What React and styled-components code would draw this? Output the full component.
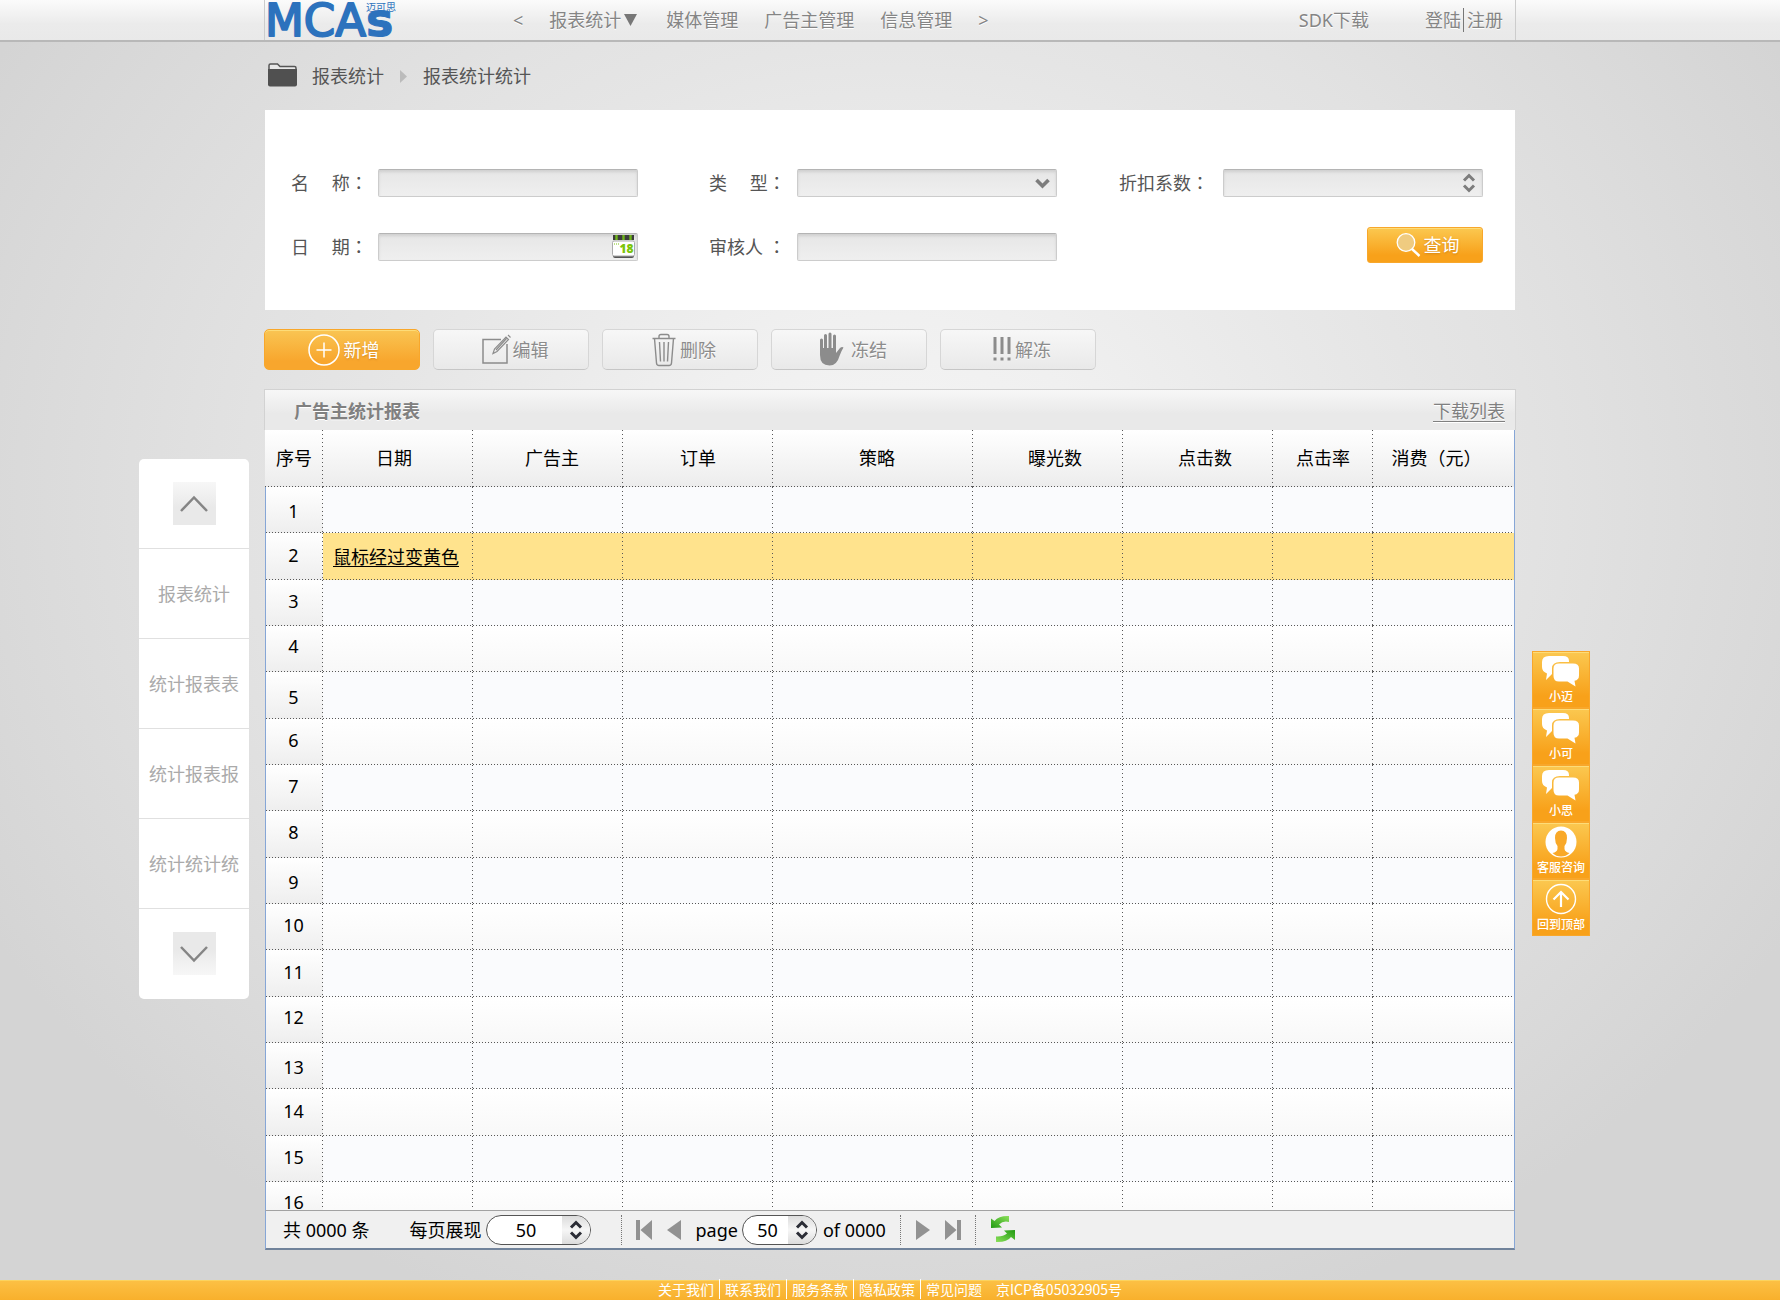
import React from "react";
import styled, { createGlobalStyle, css } from "styled-components";

const GlobalStyle = createGlobalStyle`
  *, *::before, *::after { box-sizing: border-box; }
  body {
    margin: 0;
    color: #555;
    font: 400 18px/24px "Noto Sans", "Noto Sans CJK SC", sans-serif;
    background: #d4d4d4;
  }
  button, input, select { font: inherit; color: inherit; }
  a { color: inherit; text-decoration: none; }
`;

const Page = styled.div`
  min-height: 100vh;
  display: flex;
  flex-direction: column;
  background: radial-gradient(ellipse 900px 760px at 50% 500px,
    #f5f5f5 0%, #f0f0f0 24%, #e5e5e5 60%, #e2e2e2 72%, #d9d9d9 100%, #d4d4d4 115%);
`;

/* ---------- header ---------- */
const Header = styled.header`
  height: 42px;
  border-bottom: 2px solid #b8b8b8;
  background: linear-gradient(#fbfbfb, #ebebeb 60%, #e9e9e9);
  display: flex;
  justify-content: center;
`;
const HeaderInner = styled.div`
  width: 100%;
  max-width: 1252px;
  padding-right: 12px;
  border: solid #ccc;
  border-width: 0 1px;
  display: flex;
  align-items: center;
  color: #858585;
  text-shadow: 0 1px 0 #fff;
`;
const Logo = styled.a`
  width: 132px;
  height: 40px;
  margin-right: 116px;
  flex: none;
  text-shadow: none;
  svg { display: block; overflow: visible; }
`;
const Nav = styled.nav`
  display: flex;
  align-items: center;
  gap: 26px;
  flex: 1;
  white-space: nowrap;
`;
const PlainButton = styled.button`
  border: 0;
  padding: 0;
  background: none;
  display: flex;
  align-items: center;
  gap: 3px;
  cursor: pointer;
  text-shadow: inherit;
`;
const Account = styled.div`
  display: flex;
  gap: 56px;
  white-space: nowrap;
`;
const Sign = styled.span`
  display: flex;
  a + a {
    border-left: 1px solid #777;
    margin-left: 2px;
    padding-left: 3px;
  }
`;

/* ---------- page frame ---------- */
const Frame = styled.div`
  flex: 1;
  display: grid;
  grid-template-columns: minmax(126px, 1fr) minmax(0, 1250px) minmax(75px, 1fr);
  align-items: start;
`;
const Main = styled.main`
  min-width: 0;
  padding-bottom: 30px;
`;
const Breadcrumb = styled.nav`
  height: 68px;
  padding: 0 3px;
  display: flex;
  align-items: center;
  gap: 15px;
`;

/* ---------- search ---------- */
const SearchPanel = styled.form`
  height: 200px;
  padding: 59px 32px 0 26px;
  background: #fff;
  display: grid;
  grid-template-columns: 418fr 410fr 364fr;
  grid-auto-rows: 28px;
  row-gap: 36px;
  align-items: center;
`;
const Field = styled.div`
  display: flex;
  align-items: center;
`;
const FieldLabel = styled.label`
  width: ${(p) => p.$width}px;
  flex: none;
  padding-bottom: 2px;
  white-space: pre;
`;
const Colon = styled.span`
  font-family: "Noto Sans CJK TC", sans-serif;
`;
const Control = styled.div`
  position: relative;
  width: 260px;
  min-width: 0;
  height: 28px;
  svg {
    position: absolute;
    right: 3px;
    top: 1px;
    pointer-events: none;
  }
`;
const controlStyle = css`
  display: block;
  width: 100%;
  height: 100%;
  padding: 0 32px 0 8px;
  border: 1px solid #ccc;
  border-top-color: #b4b4b4;
  border-radius: 2px;
  background: linear-gradient(#e6e6e6, #efefef);
  box-shadow: inset 0 2px 3px rgba(0, 0, 0, 0.1);
  appearance: none;
  outline-color: #f8a51b;
`;
const TextInput = styled.input`${controlStyle}
  &::-webkit-inner-spin-button { display: none; }
`;
const SelectInput = styled.select`${controlStyle}`;
const SearchAction = styled.div`
  display: flex;
  justify-content: flex-end;
  padding-bottom: 4px;
`;

/* ---------- buttons ---------- */
const orange = css`
  color: #fff;
  border-color: #f8a72b;
  background: linear-gradient(#fbc850, #f8a11a 80%);
  text-shadow: 0 1px 2px rgba(160, 90, 0, 0.4);
  box-shadow: inset 0 1px 0 #fddc78;
`;
const SearchButton = styled.button`
  width: 116px;
  height: 36px;
  border: 1px solid;
  border-radius: 3px;
  padding: 0 0 0 4px;
  display: flex;
  align-items: center;
  justify-content: center;
  gap: 3px;
  cursor: pointer;
  ${orange}
`;
const Toolbar = styled.div`
  display: flex;
  gap: 13px;
  margin: 19px -1px;
`;
const ToolButton = styled.button`
  width: 156px;
  height: 41px;
  padding: 0 0 0 8px;
  border: 1px solid #d6d6d6;
  border-bottom-color: #c6c6c6;
  border-radius: 5px;
  color: #8c8c8c;
  background: linear-gradient(#f7f7f7, #e9e9e9);
  text-shadow: 0 1px 0 #fff;
  display: flex;
  align-items: center;
  justify-content: center;
  gap: 4px;
  cursor: pointer;
  ${(p) => p.$primary && css`
    ${orange}
    background: linear-gradient(#f9c553, #f8a62d 80%);
    padding-left: 3px;
  `}
`;

/* ---------- report ---------- */
const ReportHead = styled.div`
  height: 41px;
  margin: 0 -1px;
  padding: 2px 10px 0 29px;
  border: 1px solid #d2d2d2;
  border-bottom: 0;
  background: linear-gradient(#f7f7f7, #e9e9e9 60%);
  color: #808080;
  text-shadow: 0 1px 0 #fff;
  display: flex;
  align-items: center;
  justify-content: space-between;
`;
const ReportTitle = styled.h2`
  margin: 0;
  font-size: 18px;
  font-weight: 700;
`;
const DownloadLink = styled.a`
  text-decoration: underline;
  text-underline-offset: 3px;
`;
const TableView = styled.div`
  height: 780px;
  overflow: hidden;
  background: #fafbfd;
`;
const dotsX = "repeating-linear-gradient(90deg, #585858 0 1px, transparent 1px 3px) bottom left / 100% 1px no-repeat";
const dotsY = "repeating-linear-gradient(#585858 0 1px, transparent 1px 4px) top right / 1px 100% no-repeat";
const Table = styled.table`
  width: 100%;
  table-layout: fixed;
  border-collapse: separate;
  border-spacing: 0;
  color: #000;
  th, td { padding: 0 0 2px; background: ${dotsX}, ${dotsY}; }
  th:last-child, td:last-child {
    background: ${dotsX};
    border-right: 1px solid #86a6d6;
  }
`;
const Col = styled.col`
  width: ${(p) => (p.$width ? `${p.$width}px` : "auto")};
`;
const HeadRow = styled.tr`
  height: 57px;
  background: linear-gradient(#fff, #ececec);
`;
const HeadCell = styled.th`
  font-weight: 400;
  && {
    padding-left: ${(p) => Math.max(p.$shift, 0)}px;
    padding-right: ${(p) => Math.max(-p.$shift, 0)}px;
  }
`;
const Row = styled.tr`
  height: 46px;
  background: #fafbfd;
  &:nth-child(3n + 2) { height: 47px; }
  &:nth-child(even) { background: linear-gradient(#fff, #f8f8f8); }
  && td:first-child {
    padding: 0 2px 4px 0;
    line-height: 16px;
    text-align: center;
    border-left: 1px solid #86a6d6;
    background: ${dotsX}, ${dotsY}, linear-gradient(#fff, #eee);
  }
  &&:nth-child(4n + 1) td:first-child { padding: 2px 2px 0 0; }
  &&:nth-child(4n) td:first-child { padding-bottom: 6px; }
  ${(p) => p.$active && css`&& { background: #ffe38d; }`}
  &&:hover { background: #ffe38d; }
`;
const CellLink = styled.a`
  display: block;
  padding: 2px 0 0 10px;
  white-space: nowrap;
  text-decoration: underline;
  text-underline-offset: 2px;
`;

/* ---------- pager ---------- */
const Pager = styled.div`
  height: 40px;
  padding: 0 17px;
  border: 1px solid #86a6d6;
  border-top-color: #a2a2a2;
  border-bottom: 2px solid #71839b;
  background: #f0f0f0;
  color: #000;
  display: flex;
  align-items: center;
  gap: 14px;
  white-space: nowrap;
`;
const PagerGroup = styled.div`
  display: flex;
  align-items: center;
  gap: 4px;
  margin-left: ${(p) => p.$indent || 0}px;
`;
const StepBox = styled.span`
  display: flex;
  width: ${(p) => p.$width}px;
  height: 30px;
  border: 1px solid #555;
  border-radius: 15px;
  background: #fff;
  overflow: hidden;
  input, select {
    flex: 1;
    min-width: 0;
    border: 0;
    padding: 0 0 0 4px;
    background: none;
    text-align: center;
    text-align-last: center;
    appearance: none;
    outline: 0;
  }
  input::-webkit-inner-spin-button { display: none; }
`;
const StepIcon = styled.span`
  width: 28px;
  flex: none;
  display: flex;
  align-items: center;
  justify-content: center;
  background: linear-gradient(#dcdcdc, #f6f6f6 50%, #dcdcdc);
`;
const Divider = styled.span`
  width: 1px;
  height: 30px;
  border-left: 1px dotted #777;
`;

/* ---------- side rails ---------- */
const SideMenu = styled.nav`
  justify-self: end;
  width: 110px;
  margin: 417px 16px 0 0;
  background: #fff;
  border-radius: 5px;
`;
const SideItem = styled.div`
  height: 90px;
  display: flex;
  align-items: center;
  justify-content: center;
  color: #aaa;
  border-bottom: 1px solid #e0e0e0;
  &:last-child { border-bottom-color: transparent; }
`;
const SideArrow = styled.button`
  width: 43px;
  height: 43px;
  border: 0;
  padding: 0;
  display: flex;
  align-items: center;
  justify-content: center;
  background: linear-gradient(#f7f7f7, #e9e9e9 60%);
  cursor: pointer;
  ${(p) => p.$down && css`background: linear-gradient(#e9e9e9 40%, #f7f7f7);`}
`;
const HelpRail = styled.aside`
  width: 58px;
  margin: 609px 0 0 17px;
`;
const HelpButton = styled.button`
  width: 58px;
  height: 57px;
  padding: 1px 0 0;
  border: 1px solid;
  font-size: 12px;
  line-height: 16px;
  font-weight: 500;
  white-space: nowrap;
  display: flex;
  flex-direction: column;
  align-items: center;
  justify-content: center;
  gap: 2px;
  cursor: pointer;
  ${orange}
  text-shadow: none;
`;

/* ---------- footer ---------- */
const Footer = styled.footer`
  height: 20px;
  border-top: 1px solid #fbd35f;
  background: linear-gradient(#fcc044, #f8b02c);
  color: #fff;
  font-family: "Noto Sans CJK SC", sans-serif;
  font-size: 14px;
  line-height: 16px;
  display: flex;
  justify-content: center;
  gap: 14px;
  white-space: nowrap;
`;
const FooterLinks = styled.span`
  display: flex;
  a + a::before {
    content: "";
    border-left: 1px solid #fff;
    margin: 0 5px;
  }
`;

/* ---------- drawings ---------- */
const LogoArt = () => (
  <svg width="132" height="40" viewBox="0 0 132 40" aria-hidden="true">
    <g fill="#2c72bd" stroke="#2c72bd" strokeLinejoin="round">
      <text x="0" y="36" fontFamily="'DejaVu Sans', sans-serif" fontSize="45" fontWeight="400" strokeWidth="2">MCA</text>
      <text x="101" y="36" fontFamily="'DejaVu Sans', sans-serif" fontSize="46" fontWeight="700" strokeWidth="1">s</text>
      <text x="101" y="11" fontFamily="'Noto Sans CJK SC', sans-serif" fontSize="10" stroke="none">迈可思</text>
    </g>
  </svg>
);
const CaretDown = () => (
  <svg width="16" height="12" viewBox="0 0 16 12" aria-hidden="true"><path d="M0 0h13L6.500 12z" fill="#777" /></svg>
);
const FolderIcon = () => (
  <svg width="29" height="26" viewBox="0 0 29 26" aria-hidden="true">
    <path d="M1 6V2.500Q1 1 2.500 1H9.500L12 3.500H26.500Q28 3.500 28 5V7" fill="#e8e8e8" stroke="#555" strokeWidth="1.500" />
    <path d="M0 6H29V21.500Q29 23.500 27 23.500H2Q0 23.500 0 21.500Z" fill="#505050" />
  </svg>
);
const CrumbArrow = () => (
  <svg width="9" height="13" viewBox="0 0 9 13" aria-hidden="true"><path d="M1 0L8 6.500L1 13z" fill="#bbb" /></svg>
);
const SelectChevron = () => (
  <svg width="22" height="26" viewBox="0 0 22 26" aria-hidden="true"><path d="M4.500 10L10.500 16L16.500 10" fill="none" stroke="#7d7d7d" strokeWidth="3.600" /></svg>
);
const UpDown = ({ color }) => (
  <svg width="22" height="26" viewBox="0 0 22 26" aria-hidden="true">
    <path d="M6 10.500L11 5.500L16 10.500M6 15.500L11 20.500L16 15.500" fill="none" stroke={color} strokeWidth="3" />
  </svg>
);
const CalendarIcon = () => (
  <svg width="23" height="26" viewBox="0 0 23 26" aria-hidden="true">
    <rect x="1" y="14" width="21" height="10" rx="2" fill="#555" />
    <rect x="0.500" y="7" width="22" height="15" rx="1.500" fill="#fff" stroke="#aaa" />
    <rect x="1" y="1" width="21" height="5" fill="#3d3d3d" />
    <path d="M4.500 1v5M11.500 1v5M18.500 1v5" stroke="#6fb51c" strokeWidth="2.400" />
    <path d="M2 10h5" stroke="#7cc50c" strokeDasharray="1 1" />
    <text x="7.500" y="19" fontFamily="'Open Sans', sans-serif" fontSize="12" fontWeight="800" fill="#7cc50c">18</text>
  </svg>
);
const SearchIcon = () => (
  <svg width="26" height="26" viewBox="0 0 26 26" fill="none" stroke="#fff" aria-hidden="true">
    <circle cx="11" cy="10.500" r="8.800" fill="#efcb80" strokeWidth="1.300" />
    <path d="M17 17L24.500 24" strokeWidth="2.400" />
  </svg>
);
const PlusIcon = () => (
  <svg width="32" height="32" viewBox="0 0 32 32" fill="none" stroke="#fff" aria-hidden="true">
    <circle cx="16" cy="16" r="15" strokeWidth="1.500" /><path d="M16 8.500v15M8.500 16h15" strokeWidth="1.500" />
  </svg>
);
const EditIcon = () => (
  <svg width="27" height="34" viewBox="0 0 27 34" fill="none" stroke="#8c8c8c" overflow="visible" aria-hidden="true">
    <path d="M19 6.500H1V30H25V11" strokeWidth="1.500" />
    <path d="M11 20.500L12.500 16L24 4L26.500 6.500L15 18.500ZM14 17L24.500 5.500M26 2L28.500 4.500" strokeWidth="1.200" />
  </svg>
);
const TrashIcon = () => (
  <svg width="24" height="34" viewBox="0 0 24 34" fill="none" stroke="#8c8c8c" strokeWidth="1.400" aria-hidden="true">
    <path d="M0.500 5.500H23.500M7 5V3.500Q7 1.500 9 1.500H15Q17 1.500 17 3.500V5M2.500 5.500L4.500 30Q4.700 32.500 7 32.500H17Q19.300 32.500 19.500 30L21.500 5.500M7.500 9L8.500 28.500M12 9V28.500M16.500 9L15.500 28.500" />
  </svg>
);
const HandIcon = () => (
  <svg width="28" height="36" viewBox="-1 0 28 36" overflow="visible" aria-hidden="true">
    <path d="M1.500 8V21M5.500 3.500V19M10 2V19M14.500 4V19" stroke="#8c8c8c" strokeWidth="3" strokeLinecap="round" />
    <path d="M0 16H16V21L20 16Q22 14.500 23.500 15.500Q21.500 18.500 19.500 24Q17 33.500 9.500 33.500Q0 33.500 0 23Z" fill="#8c8c8c" />
  </svg>
);
const BangIcon = () => (
  <svg width="18" height="26" viewBox="0 0 18 26" fill="none" stroke="#8c8c8c" strokeWidth="3" aria-hidden="true">
    <path d="M2 0V17M9 0V17M16 0V17M2 20.500V23.500M9 20.500V23.500M16 20.500V23.500" />
  </svg>
);
const SideChevron = ({ down }) => (
  <svg width="28" height="18" viewBox="0 0 28 18" fill="none" stroke="#858585" strokeWidth="2.500" aria-hidden="true">
    <path d={down ? "M1 2L14 15.500L27 2" : "M1 16L14 2.500L27 16"} />
  </svg>
);
const ChatIcon = () => (
  <svg width="38" height="32" viewBox="0 0 38 32" aria-hidden="true">
    <path d="M7 1H21Q27 1 27 6V7H18Q10 7 10 13.500V19L4 25L5 18.500Q0 16.500 0 12V7Q0 1 7 1Z" fill="#fff" />
    <path d="M17 8.500H31Q37 8.500 37 13.500V20.500Q37 25 32.500 25.800L33.500 31.500L25.500 26.500H17Q11.500 26.500 11.500 21V13.500Q11.500 8.500 17 8.500Z" fill="#fff" />
  </svg>
);
const PersonIcon = () => (
  <svg width="32" height="32" viewBox="0 0 32 32" aria-hidden="true">
    <circle cx="16" cy="16" r="15.500" fill="#fff" />
    <path d="M16 4.500Q22 4.500 22 12Q22 17 19.500 20V23Q20 26 24.500 27Q21 30.500 16 30.500Q11 30.500 7.500 27Q12 26 12.500 23V20Q10 17 10 12Q10 4.500 16 4.500Z" fill="#f9a928" />
  </svg>
);
const TopIcon = () => (
  <svg width="32" height="32" viewBox="0 0 32 32" fill="none" stroke="#fff" aria-hidden="true">
    <circle cx="16" cy="16" r="14.500" strokeWidth="1.400" />
    <path d="M16 24V9.500M8.500 16.500L16 9L23.500 16.500" strokeWidth="2.200" />
  </svg>
);
const pageIcons = {
  first: "M0 0H4V26H0ZM16 0V26L4.500 13Z",
  prev: "M15 0V26L1 13Z",
  next: "M1 0V26L15 13Z",
  last: "M0 0V26L11.500 13ZM12 0H16V26H12Z",
};
const PageIcon = ({ name }) => (
  <svg width="16" height="20" viewBox="0 0 16 26" preserveAspectRatio="none" aria-hidden="true"><path d={pageIcons[name]} fill="#929292" /></svg>
);
const RefreshIcon = () => (
  <svg width="26" height="30" viewBox="0 0 26 30" aria-hidden="true">
    <defs>
      <linearGradient id="leaf" x1="0" y1="1" x2="1" y2="0"><stop offset="0" stopColor="#219a12" /><stop offset="1" stopColor="#8be05a" /></linearGradient>
      <linearGradient id="leafBack" x1="1" y1="0" x2="0" y2="1"><stop offset="0" stopColor="#219a12" /><stop offset="1" stopColor="#8be05a" /></linearGradient>
    </defs>
    <path d="M1 3.500L4.500 6Q9 0.500 19 1V7Q13 5.500 9 9.500L12 12.500L1 13Z" fill="url(#leaf)" />
    <path d="M25 15L14 15.500L17 18.500Q13 22 6 21.500V27Q17 27.500 21 22L25 25Z" fill="url(#leafBack)" />
  </svg>
);

/* ---------- data ---------- */
const columns = [
  { name: "序号", width: 58, shift: 0 },
  { name: "日期", width: 150, shift: -8 },
  { name: "广告主", width: 150, shift: 8 },
  { name: "订单", width: 150, shift: 0 },
  { name: "策略", width: 200, shift: 8 },
  { name: "曝光数", width: 150, shift: 14 },
  { name: "点击数", width: 150, shift: 14 },
  { name: "点击率", width: 100, shift: 0 },
  { name: "消费（元）", shift: -14 },
];
const rows = Array.from({ length: 16 }, (_, i) => i + 1);
const tools = [
  { label: "新增", icon: <PlusIcon />, primary: true },
  { label: "编辑", icon: <EditIcon /> },
  { label: "删除", icon: <TrashIcon /> },
  { label: "冻结", icon: <HandIcon /> },
  { label: "解冻", icon: <BangIcon /> },
];
const sideLinks = ["报表统计", "统计报表表", "统计报表报", "统计统计统"];
const helpers = [
  { label: "小迈", icon: <ChatIcon /> },
  { label: "小可", icon: <ChatIcon /> },
  { label: "小思", icon: <ChatIcon /> },
  { label: "客服咨询", icon: <PersonIcon /> },
  { label: "回到顶部", icon: <TopIcon /> },
];
const footerLinks = ["关于我们", "联系我们", "服务条款", "隐私政策", "常见问题"];

export default function App() {
  return (
    <Page>
      <GlobalStyle />
      <Header>
        <HeaderInner>
          <Logo href="#" aria-label="MCAs"><LogoArt /></Logo>
          <Nav>
            <PlainButton type="button">&lt;</PlainButton>
            <PlainButton type="button">报表统计<CaretDown /></PlainButton>
            <a href="#media">媒体管理</a>
            <a href="#advertisers">广告主管理</a>
            <a href="#messages">信息管理</a>
            <PlainButton type="button">&gt;</PlainButton>
          </Nav>
          <Account>
            <a href="#sdk">SDK下载</a>
            <Sign><a href="#login">登陆</a><a href="#register">注册</a></Sign>
          </Account>
        </HeaderInner>
      </Header>

      <Frame>
        <SideMenu>
          <SideItem><SideArrow type="button" aria-label="向上"><SideChevron /></SideArrow></SideItem>
          {sideLinks.map((label) => (
            <SideItem key={label}><a href="#report">{label}</a></SideItem>
          ))}
          <SideItem><SideArrow type="button" $down aria-label="向下"><SideChevron down /></SideArrow></SideItem>
        </SideMenu>

        <Main>
          <Breadcrumb>
            <FolderIcon />
            <a href="#reports">报表统计</a>
            <CrumbArrow />
            <a href="#summary">报表统计统计</a>
          </Breadcrumb>

          <SearchPanel onSubmit={(e) => e.preventDefault()}>
            <Field>
              <FieldLabel $width={87} htmlFor="name">{"名\u3000 称"}<Colon>：</Colon></FieldLabel>
              <Control><TextInput id="name" type="text" /></Control>
            </Field>
            <Field>
              <FieldLabel $width={88} htmlFor="kind">{"类\u3000 型"}<Colon>：</Colon></FieldLabel>
              <Control>
                <SelectInput id="kind"><option value="" /></SelectInput>
                <SelectChevron />
              </Control>
            </Field>
            <Field>
              <FieldLabel $width={104} htmlFor="discount">折扣系数<Colon>：</Colon></FieldLabel>
              <Control>
                <TextInput id="discount" type="number" />
                <UpDown color="#7d7d7d" />
              </Control>
            </Field>
            <Field>
              <FieldLabel $width={87} htmlFor="date">{"日\u3000 期"}<Colon>：</Colon></FieldLabel>
              <Control>
                <TextInput id="date" type="text" />
                <CalendarIcon />
              </Control>
            </Field>
            <Field>
              <FieldLabel $width={88} htmlFor="auditor">审核人 <Colon>：</Colon></FieldLabel>
              <Control><TextInput id="auditor" type="text" /></Control>
            </Field>
            <SearchAction>
              <SearchButton type="submit"><SearchIcon />查询</SearchButton>
            </SearchAction>
          </SearchPanel>

          <Toolbar>
            {tools.map((t) => (
              <ToolButton key={t.label} type="button" $primary={t.primary}>{t.icon}{t.label}</ToolButton>
            ))}
          </Toolbar>

          <ReportHead>
            <ReportTitle>广告主统计报表</ReportTitle>
            <DownloadLink href="#download">下载列表</DownloadLink>
          </ReportHead>
          <TableView>
            <Table>
              <colgroup>
                {columns.map((c) => <Col key={c.name} $width={c.width} />)}
              </colgroup>
              <thead>
                <HeadRow>
                  {columns.map((c) => <HeadCell key={c.name} scope="col" $shift={c.shift}>{c.name}</HeadCell>)}
                </HeadRow>
              </thead>
              <tbody>
                {rows.map((n) => (
                  <Row key={n} $active={n === 2}>
                    <td>{n}</td>
                    {columns.slice(1).map((c, i) => (
                      <td key={c.name}>
                        {n === 2 && i === 0 && <CellLink href="#row">鼠标经过变黄色</CellLink>}
                      </td>
                    ))}
                  </Row>
                ))}
              </tbody>
            </Table>
          </TableView>
          <Pager>
            <span>共 0000 条</span>
            <PagerGroup $indent={26}>
              <label htmlFor="size">每页展现</label>
              <StepBox $width={105}>
                <select id="size" defaultValue="50"><option>50</option></select>
                <StepIcon><UpDown color="#2b2d36" /></StepIcon>
              </StepBox>
            </PagerGroup>
            <PagerGroup $indent={16}><Divider /></PagerGroup>
            <PlainButton type="button" aria-label="首页"><PageIcon name="first" /></PlainButton>
            <PlainButton type="button" aria-label="上一页"><PageIcon name="prev" /></PlainButton>
            <PagerGroup>
              <label htmlFor="page">page</label>
              <StepBox $width={75}>
                <input id="page" type="number" defaultValue="50" />
                <StepIcon><UpDown color="#2b2d36" /></StepIcon>
              </StepBox>
              <PagerGroup $indent={2}>of 0000</PagerGroup>
            </PagerGroup>
            <Divider />
            <PlainButton type="button" aria-label="下一页"><PageIcon name="next" /></PlainButton>
            <PlainButton type="button" aria-label="末页"><PageIcon name="last" /></PlainButton>
            <Divider />
            <PlainButton type="button" aria-label="刷新"><RefreshIcon /></PlainButton>
          </Pager>
        </Main>

        <HelpRail>
          {helpers.map((h) => (
            <HelpButton key={h.label} type="button">{h.icon}{h.label}</HelpButton>
          ))}
        </HelpRail>
      </Frame>

      <Footer>
        <FooterLinks>
          {footerLinks.map((label) => <a key={label} href="#info">{label}</a>)}
        </FooterLinks>
        <span>京ICP备05032905号</span>
      </Footer>
    </Page>
  );
}
